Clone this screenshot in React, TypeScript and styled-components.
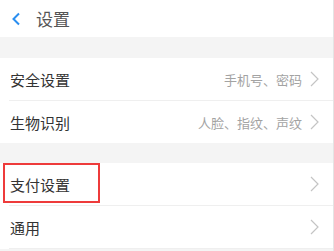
import React from 'react';
import styled, {createGlobalStyle} from 'styled-components';

const GlobalStyle = createGlobalStyle`
  html, body {
    margin: 0;
    padding: 0;
    background: #ffffff;
    font-family: "Noto Sans CJK SC", "Noto Sans", sans-serif;
  }
`

const Page = styled.div`
  width: 334px;
  height: 251px;
  overflow: hidden;
  background: #f4f4f4;
  border-right: 1px solid #e4e4e4;
  box-sizing: border-box;
`

const Header = styled.div`
  height: 37px;
  background: #fff;
  display: flex;
  align-items: center;
  padding-left: 11px;
  gap: 15px;
`

const Title = styled.span`
  font-size: 17px;
  color: #555;
  line-height: 1;
`

const Gap = styled.div<{ $h: number }>`
  height: ${p => p.$h}px;
`

const Group = styled.div`
  background: #fff;
`

const Row = styled.div<{ $last?: boolean }>`
  position: relative;
  height: 42px;
  display: flex;
  align-items: center;
  margin-left: 9px;
  padding: 0 14px 0 1px;
  border-bottom: ${p => (p.$last ? 'none' : '1px solid #efefef')};
`

const Label = styled.span`
  font-size: 15px;
  color: #333;
  flex: 1;
`

const Hint = styled.span`
  font-size: 13px;
  color: #a3a3a3;
  margin-right: 8px;
`

const Highlight = styled.div`
  position: absolute;
  left: -6px;
  top: 0;
  width: 93px;
  height: 36px;
  border: 2px solid #ee3b3b;
`

const Back = () => (
    <svg width="10" height="14" viewBox="0 0 10 14">
        <path d="M8 1.5 L2.5 7 L8 12.5" fill="none" stroke="#2a8ef0" strokeWidth="2"/>
    </svg>
)

const Chevron = () => (
    <svg width="9" height="16" viewBox="0 0 9 16">
        <path d="M1 1 L8 8 L1 15" fill="none" stroke="#c4c4c4" strokeWidth="1.2"/>
    </svg>
)

const App = () => (
    <>
        <GlobalStyle/>
        <Page>
            <Header>
                <Back/>
                <Title>设置</Title>
            </Header>
            <Gap $h={21}/>
            <Group>
                <Row>
                    <Label>安全设置</Label>
                    <Hint>手机号、密码</Hint>
                    <Chevron/>
                </Row>
                <Row $last>
                    <Label>生物识别</Label>
                    <Hint>人脸、指纹、声纹</Hint>
                    <Chevron/>
                </Row>
            </Group>
            <Gap $h={20}/>
            <Group>
                <Row>
                    <Highlight/>
                    <Label>支付设置</Label>
                    <Chevron/>
                </Row>
                <Row>
                    <Label>通用</Label>
                    <Chevron/>
                </Row>
            </Group>
        </Page>
    </>
);

export default App;
